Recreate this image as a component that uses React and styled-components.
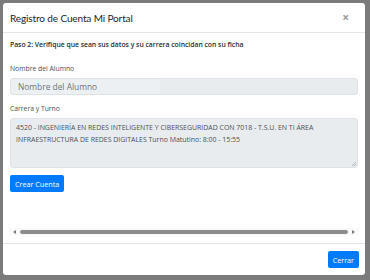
import React from "react";
import styled, { createGlobalStyle } from "styled-components";

const Global = createGlobalStyle`
  html, body { margin: 0; padding: 0; }
  body {
    background: #7b7b7b;
    width: 370px;
    height: 280px;
    overflow: hidden;
    font-family: "Open Sans", "Noto Sans", sans-serif;
  }
`;

const Backdrop = styled.div`
  padding: 3px 5px 5px 3px;
  height: 280px;
  box-sizing: border-box;
`;

const Modal = styled.div`
  background: #fff;
  border-radius: 3px;
  height: 272px;
  display: flex;
  flex-direction: column;
  overflow: hidden;
`;

const Header = styled.div`
  height: 29px;
  flex: none;
  display: flex;
  align-items: center;
  justify-content: space-between;
  padding: 0 16px 0 7px;
  border-bottom: 1px solid #e6e6e6;
`;

const Title = styled.h5`
  margin: 0;
  font-family: Lato, "Open Sans", sans-serif;
  font-size: 10px;
  letter-spacing: -0.12px;
  font-weight: 400;
  color: #212529;
`;

const Close = styled.span`
  font-size: 12px;
  font-weight: 700;
  color: #9a9a9a;
  line-height: 1;
`;

const Body = styled.div`
  flex: 1;
  padding: 7px 7px 0 7px;
  display: flex;
  flex-direction: column;
`;

const Step = styled.div`
  font-size: 6.8px;
  font-weight: 600;
  color: #1d2b3a;
  line-height: 10px;
  margin-bottom: 14px;
`;

const Label = styled.div`
  font-size: 6.8px;
  color: #495057;
  line-height: 10px;
  margin-bottom: 4px;
`;

const Input = styled.div`
  height: 17px;
  background: #e9ecef;
  border: 1px solid #dfe3e7;
  border-radius: 3px;
  box-sizing: border-box;
  display: flex;
  margin-bottom: 9px;
`;

const InputFill = styled.div`
  width: 142px;
  background: #edf0f2;
  border-radius: 3px 0 0 3px;
  padding-left: 7px;
  font-size: 8.4px;
  color: #6c757d;
  line-height: 15px;
`;

const Textarea = styled.div`
  position: relative;
  height: 50px;
  background: #e9ecef;
  border: 1px solid #dfe3e7;
  border-radius: 3px;
  box-sizing: border-box;
  padding: 3px 5px;
  font-size: 6.95px;
  line-height: 12px;
  color: #495057;
  margin-bottom: 7px;
`;

const Grip = styled.svg`
  position: absolute;
  right: 1px;
  bottom: 1px;
`;

const Button = styled.button`
  font-family: inherit;
  background: #007bff;
  color: #fff;
  border: none;
  border-radius: 2px;
  height: 17px;
  padding: 0 ${(p) => p.$pad}px;
  font-size: 7.2px;
  cursor: pointer;
  align-self: ${(p) => p.$align || "flex-start"};
`;

const Spacer = styled.div`
  flex: 1;
`;

const ScrollBar = styled.div`
  height: 7px;
  margin: 0 0 8px 0;
  display: flex;
  align-items: center;
  gap: 4px;
  padding: 0 3px;
  background: #fafafa;
`;

const Thumb = styled.div`
  flex: 1;
  height: 4px;
  border-radius: 2px;
  background: #8c8c8c;
`;

const Arrow = styled.svg`
  flex: none;
`;

const Footer = styled.div`
  height: 31px;
  flex: none;
  border-top: 1px solid #e6e6e6;
  display: flex;
  align-items: center;
  justify-content: flex-end;
  padding: 0 6px;
`;

export default function App() {
  return (
    <>
      <Global />
      <Backdrop>
        <Modal>
          <Header>
            <Title>Registro de Cuenta Mi Portal</Title>
            <Close>×</Close>
          </Header>
          <Body>
            <Step>Paso 2: Verifique que sean sus datos y su carrera coincidan con su ficha</Step>
            <Label>Nombre del Alumno</Label>
            <Input>
              <InputFill>Nombre del Alumno</InputFill>
            </Input>
            <Label>Carrera y Turno</Label>
            <Textarea>
              4520 - INGENIERÍA EN REDES INTELIGENTE Y CIBERSEGURIDAD CON 7018 - T.S.U. EN TI ÁREA
              INFRAESTRUCTURA DE REDES DIGITALES Turno Matutino: 8:00 - 15:55
              <Grip width="5" height="5" viewBox="0 0 5 5">
                <path d="M5 1 L1 5 M5 3 L3 5" stroke="#a0a0a0" strokeWidth="0.7" />
              </Grip>
            </Textarea>
            <Button $pad={5}>Crear Cuenta</Button>
            <Spacer />
            <ScrollBar>
              <Arrow width="3" height="4" viewBox="0 0 3 4">
                <path d="M3 0 L0 2 L3 4 Z" fill="#7a7a7a" />
              </Arrow>
              <Thumb />
              <Arrow width="3" height="4" viewBox="0 0 3 4">
                <path d="M0 0 L3 2 L0 4 Z" fill="#7a7a7a" />
              </Arrow>
            </ScrollBar>
          </Body>
          <Footer>
            <Button $pad={5} $align="center">Cerrar</Button>
          </Footer>
        </Modal>
      </Backdrop>
    </>
  );
}
